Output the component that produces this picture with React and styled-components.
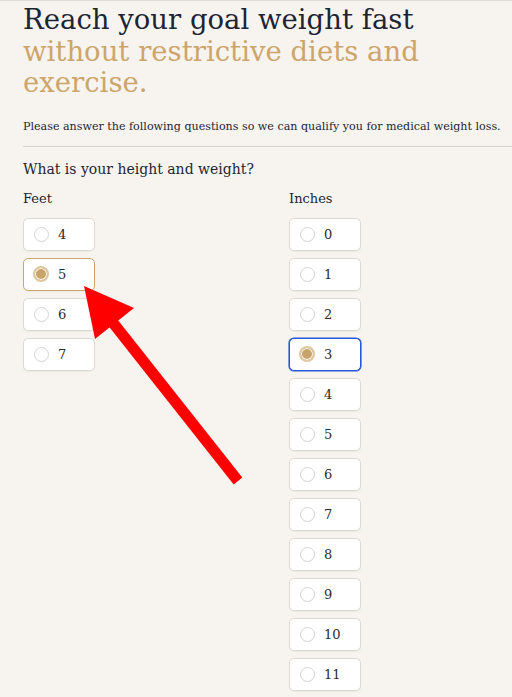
import React from 'react'
import styled, { createGlobalStyle } from 'styled-components'

const GlobalStyle = createGlobalStyle`
  html, body {
    margin: 0;
    padding: 0;
    background: #f7f4ef;
  }
  body {
    font-family: 'DejaVu Serif', 'Liberation Serif', serif;
    color: #1d2535;
  }
`

const Page = styled.div`
  position: relative;
  padding: 0 0 0 23px;
  border-top: 1px solid #e2ddd6;
  min-height: 696px;
  overflow: hidden;
`

const Title = styled.h1`
  margin: 0;
  padding-top: 3px;
  font-weight: 400;
  font-size: 27.5px;
  line-height: 31.5px;
  color: #1d2535;
`

const Accent = styled.span`
  color: #cda56b;
`

const Intro = styled.p`
  margin: 18px 0 0;
  font-size: 11.1px;
  line-height: 20px;
  padding-bottom: 9px;
  border-bottom: 1px solid #d6d1ca;
  white-space: nowrap;
`

const Question = styled.h2`
  margin: 12px 0 0;
  font-size: 14px;
  font-weight: 400;
  line-height: 20px;
`

const Columns = styled.div`
  display: grid;
  grid-template-columns: 266px 1fr;
  margin-top: 10px;
`

const Column = styled.div`
  display: flex;
  flex-direction: column;
`

const Label = styled.div`
  font-size: 13px;
  line-height: 20px;
  margin-bottom: 9px;
`

const Options = styled.div`
  display: flex;
  flex-direction: column;
  gap: 7px;
`

const Option = styled.label`
  display: flex;
  align-items: center;
  gap: 9px;
  width: 72px;
  height: 33px;
  box-sizing: border-box;
  padding-left: 9px;
  background: #fff;
  border: 1px solid ${p => (p.$focus ? '#2456d6' : p.$checked ? '#cda56b' : '#dcd8d2')};
  border-radius: 5px;
  box-shadow: ${p => (p.$focus ? '0 0 0 0.6px #2456d6' : '0 1px 1px rgba(0, 0, 0, 0.04)')};
  font-size: 13px;
  color: #2a2a2a;
`

const Radio = styled.span`
  width: ${p => (p.$checked ? '16px' : '15px')};
  height: ${p => (p.$checked ? '16px' : '15px')};
  margin-left: ${p => (p.$checked ? '0' : '1px')};
  box-sizing: border-box;
  border-radius: 50%;
  border: ${p => (p.$checked ? '2px solid #dfc79f' : '1px solid #d6d3cf')};
  background: ${p => (p.$checked ? '#c9a46a' : '#fff')};
  box-shadow: ${p => (p.$checked ? 'inset 0 0 0 1px #fff' : 'none')};
  flex-shrink: 0;
`

const Arrow = styled.svg`
  position: absolute;
  left: 0;
  top: 0;
  pointer-events: none;
`

const feet = [4, 5, 6, 7]
const inches = [0, 1, 2, 3, 4, 5, 6, 7, 8, 9, 10, 11]

const Choice = ({ value, checked, focus }) => (
  <Option $checked={checked} $focus={focus}>
    <Radio $checked={checked} />
    {value}
  </Option>
)

export default function App() {
  return (
    <>
      <GlobalStyle />
      <Page>
        <Title>
          Reach your goal weight fast
          <br />
          <Accent>without restrictive diets and exercise.</Accent>
        </Title>
        <Intro>Please answer the following questions so we can qualify you for medical weight loss.</Intro>
        <Question>What is your height and weight?</Question>
        <Columns>
          <Column>
            <Label>Feet</Label>
            <Options>
              {feet.map(f => (
                <Choice key={f} value={f} checked={f === 5} />
              ))}
            </Options>
          </Column>
          <Column>
            <Label>Inches</Label>
            <Options>
              {inches.map(i => (
                <Choice key={i} value={i} checked={i === 3} focus={i === 3} />
              ))}
            </Options>
          </Column>
        </Columns>
        <Arrow width="512" height="697" viewBox="0 0 512 697">
          <line x1="238" y1="480" x2="110" y2="318" stroke="#ff0000" strokeWidth="11" />
          <polygon points="84,285 134,307 95,338" fill="#ff0000" />
        </Arrow>
      </Page>
    </>
  )
}
